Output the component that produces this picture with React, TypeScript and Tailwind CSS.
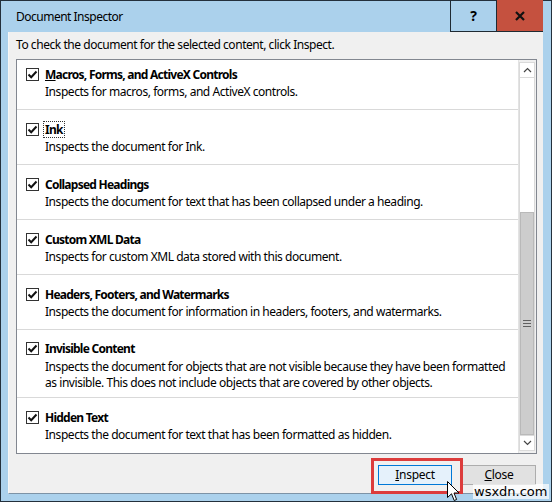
import React from 'react';

const items = [
  { title: 'Macros, Forms, and ActiveX Controls', u: true, desc: ['Inspects for macros, forms, and ActiveX controls.'] },
  { title: 'Ink', focus: true, desc: ['Inspects the document for Ink.'] },
  { title: 'Collapsed Headings', desc: ['Inspects the document for text that has been collapsed under a heading.'] },
  { title: 'Custom XML Data', desc: ['Inspects for custom XML data stored with this document.'] },
  { title: 'Headers, Footers, and Watermarks', desc: ['Inspects the document for information in headers, footers, and watermarks.'] },
  {
    title: 'Invisible Content',
    desc: [
      'Inspects the document for objects that are not visible because they have been formatted',
      'as invisible. This does not include objects that are covered by other objects.',
    ],
  },
  { title: 'Hidden Text', desc: ['Inspects the document for text that has been formatted as hidden.'] },
];

type Item = { title: string; u?: boolean; focus?: boolean; desc: string[] };

function CheckBox() {
  return (
    <div className="w-[13px] h-[13px] border border-[#333333] bg-white flex items-center justify-center shrink-0">
      <svg width="11" height="11" viewBox="0 0 11 11">
        <path d="M1.5 5.5 L4.2 8.2 L9.5 2.5" fill="none" stroke="#111" strokeWidth="2" />
      </svg>
    </div>
  );
}

function Row({ item, first }: { item: Item; first: boolean }) {
  const multi = item.desc.length > 1;
  const pad = first ? 'pt-[6px] pb-[10px]' : multi ? 'pt-[10px] pb-[6px] border-t border-[#d9d9d9]' : 'pt-[11px] pb-[10px] border-t border-[#d9d9d9]';
  return (
    <div className={`flex flex-col ${pad}`}>
      <div className="flex items-center h-[16px] pl-[9px]">
        <CheckBox />
        <span
          className={`font-bold text-[12px] leading-[15px] tracking-[-0.75px] whitespace-nowrap ${
            item.focus ? 'ml-[5px] px-[1px] outline outline-1 outline-dotted outline-[#333]' : 'ml-[6px]'
          }`}
        >
          {item.u ? (
            <>
              <span className="underline">{item.title.charAt(0)}</span>
              {item.title.slice(1)}
            </>
          ) : (
            item.title
          )}
        </span>
      </div>
      <div
        className={`mt-[3px] pl-[28px] text-[12px] tracking-[-0.45px] whitespace-nowrap ${
          multi ? 'leading-[16px]' : 'leading-[14px]'
        }`}
      >
        {item.desc.map((d) => (
          <div key={d}>{d}</div>
        ))}
      </div>
    </div>
  );
}

function Scrollbar() {
  return (
    <div className="w-[18px] flex flex-col border-l border-[#e3e3e3] bg-[#f0f0f0] py-[2px] pr-[1px]">
      <div className="h-[16px] bg-white border border-[#dadada] flex items-center justify-center">
        <svg width="9" height="6" viewBox="0 0 9 6">
          <path d="M1 5 L4.5 1.5 L8 5" fill="none" stroke="#444" strokeWidth="1.2" />
        </svg>
      </div>
      <div className="flex-1 flex flex-col justify-end bg-white border-x border-[#dadada]">
        <div className="h-[223px] bg-[#cdcdcd] border border-[#b9b9b9] flex items-center justify-center">
          <svg width="8" height="7" viewBox="0 0 8 7">
            <path d="M0 0.5 H8 M0 3.5 H8 M0 6.5 H8" stroke="#606060" strokeWidth="1" />
          </svg>
        </div>
      </div>
      <div className="h-[16px] bg-white border border-[#dadada] flex items-center justify-center">
        <svg width="9" height="6" viewBox="0 0 9 6">
          <path d="M1 1 L4.5 4.5 L8 1" fill="none" stroke="#444" strokeWidth="1.2" />
        </svg>
      </div>
    </div>
  );
}

export default function App() {
  return (
    <div
      className="relative w-[552px] h-[502px] border border-[#23303c] bg-[#abd1ec] flex flex-col text-black"
      style={{ fontFamily: '"Noto Sans", "Open Sans", sans-serif' }}
    >
      {/* title bar */}
      <div className="h-[31px] flex items-stretch pr-[8px]">
        <div className="flex-1 pl-[15px] pt-[7px] text-[12px] leading-[18px] tracking-[-0.5px]">Document Inspector</div>
        <div className="w-[47px] -mt-[1px] border-x border-b border-[#1f2a33] flex items-center justify-center text-[14px] font-bold">
          ?
        </div>
        <div className="w-[46px] -mt-[1px] bg-[#c5513f] border-b border-[#1f2a33] flex items-center justify-center">
          <svg width="10" height="10" viewBox="0 0 10 10">
            <path d="M1 1 L9 9 M9 1 L1 9" stroke="#111" strokeWidth="2.2" />
          </svg>
        </div>
      </div>

      {/* client area */}
      <div className="flex-1 ml-[7px] mr-[8px] mb-[7px] bg-[#f0f0f0] border-l border-[#f7f7f7] border-b border-b-[#7d93a6] flex flex-col pl-[7px] pr-[6px]">
        <div className="pt-[6px] h-[27px] text-[12px] leading-[14px] tracking-[-0.45px] whitespace-nowrap">
          To check the document for the selected content, click Inspect.
        </div>
        <div className="h-[395px] border border-[#828790] bg-white flex">
          <div className="flex-1 overflow-hidden flex flex-col">
            {items.map((it, i) => (
              <Row key={it.title} item={it} first={i === 0} />
            ))}
          </div>
          <Scrollbar />
        </div>
        <div className="mt-[11px] flex justify-end gap-[10px] pr-[1px]">
          <div className="relative">
            <div className="w-[74px] h-[20px] bg-[#e5f1fb] border border-[#0078d7] flex items-center justify-center text-[12px] tracking-[-0.3px]">
              <span className="underline">I</span>nspect
            </div>
            <div className="absolute -left-[7px] -top-[7px] w-[92px] h-[36px] border-[3px] border-[#dc3c3c]" />
          </div>
          <div className="w-[74px] h-[20px] bg-[#e1e1e1] border border-[#adadad] flex items-center justify-center text-[12px] tracking-[-0.3px]">
            <span className="underline">C</span>lose
          </div>
        </div>
      </div>

      {/* mouse pointer */}
      <svg className="absolute left-[446px] top-[480px]" width="13" height="21" viewBox="0 0 13 21">
        <path d="M0.5 0.5 L0.5 16.5 L4.5 12.8 L7.2 19.5 L9.6 18.5 L7 12 L12 12 Z" fill="#fff" stroke="#000" strokeWidth="1" />
      </svg>

      {/* watermark */}
      <div
        className="absolute left-[472px] top-[483px] px-[1px] text-[13px] leading-[15px] bg-white/70"
        style={{ fontFamily: '"DejaVu Sans", sans-serif' }}
      >
        wsxdn.com
      </div>
    </div>
  );
}
